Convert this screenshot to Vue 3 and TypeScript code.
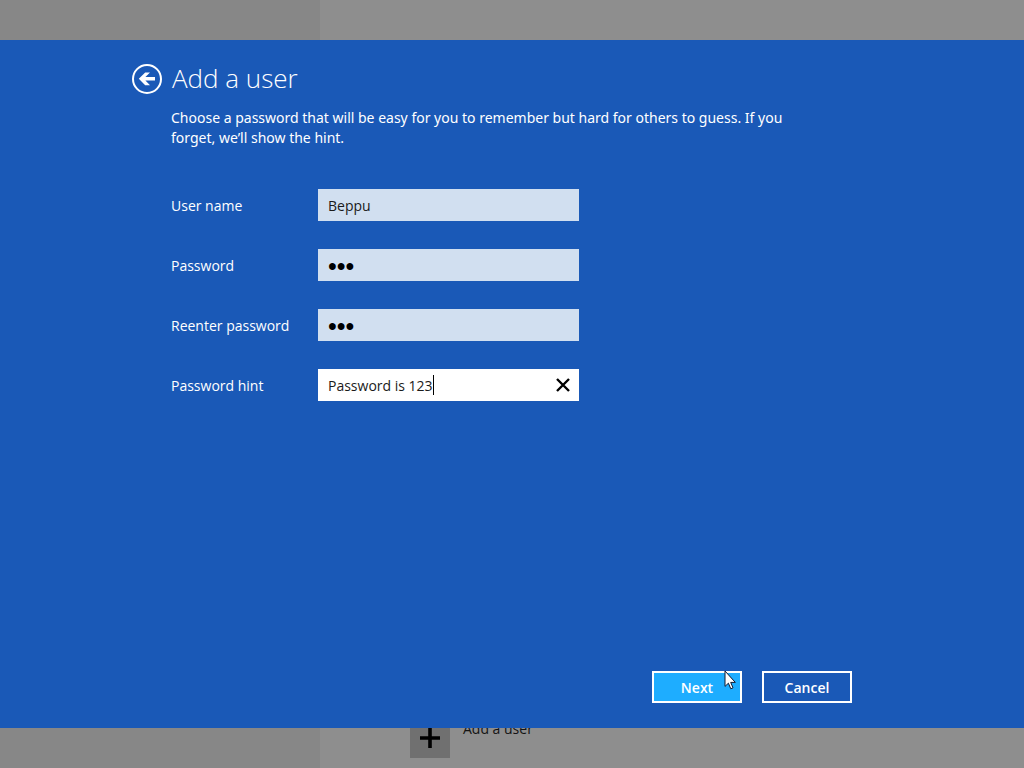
<script setup lang="ts">
import { ref } from 'vue'

interface SecretField {
  id: string
  label: string
  value: string
}

const userName = ref('Beppu')
const secrets = ref<SecretField[]>([
  { id: 'password', label: 'Password', value: '123' },
  { id: 'reenter', label: 'Reenter password', value: '123' },
])
const hint = ref('Password is 123')
</script>

<template>
  <div class="screen">
    <div class="settings">
      <aside class="sidebar"></aside>
      <main class="accounts">
        <button class="add-user" type="button">
          <span class="tile">
            <svg viewBox="0 0 40 40" width="40" height="40" aria-hidden="true">
              <path d="M20 10v20M10 20h20" stroke="#000" stroke-width="3.6" fill="none" />
            </svg>
          </span>
          <span class="add-label">Add a user</span>
        </button>
      </main>
    </div>

    <form class="dialog" @submit.prevent>
      <header class="head">
        <button class="back" type="button" aria-label="Back">
          <svg viewBox="0 0 30 30" width="30" height="30" aria-hidden="true">
            <circle cx="15" cy="15" r="14" fill="none" stroke="#fff" stroke-width="2" />
            <path d="M6.8 14.8L13.2 8.4H18L13.4 13H23V16.6H13.4L18 21.2H13.2Z" fill="#fff" />
          </svg>
        </button>
        <h1>Add a user</h1>
      </header>

      <div class="content">
        <p class="intro">
          Choose a password that will be easy for you to remember but hard for others to guess. If you
          forget, we’ll show the hint.
        </p>

        <div class="fields">
          <label for="username">User name</label>
          <input id="username" v-model="userName" class="box" type="text" />

          <template v-for="field in secrets" :key="field.id">
            <label :for="field.id">{{ field.label }}</label>
            <input :id="field.id" v-model="field.value" class="box secret" type="password" />
          </template>

          <label for="hint">Password hint</label>
          <div class="box active">
            <input id="hint" v-model="hint" class="hint" type="text" />
            <span class="caret"></span>
            <button class="clear" type="button" aria-label="Clear" @click="hint = ''">
              <svg viewBox="0 0 14 14" width="14" height="14" aria-hidden="true">
                <path d="M1 1L13 13M13 1L1 13" stroke="#000" stroke-width="2.4" fill="none" />
              </svg>
            </button>
          </div>
        </div>
      </div>

      <footer class="actions">
        <button class="action primary" type="submit">
          Next
          <svg class="pointer" viewBox="0 0 12 20" width="12" height="20" aria-hidden="true">
            <path
              d="M1 0V15.4L4.4 12.2L6.8 17.8L9 16.8L6.7 11.4H11.3Z"
              fill="#fff"
              stroke="#101830"
              stroke-width="1"
            />
          </svg>
        </button>
        <button class="action" type="button">Cancel</button>
      </footer>
    </form>
  </div>
</template>

<style>
body {
  margin: 0;
}
</style>

<style scoped>
.screen {
  position: relative;
  min-height: 100vh;
  display: flex;
  font-family: 'Open Sans', 'Noto Sans', sans-serif;
  font-size: 14px;
  line-height: 20px;
  color: #fff;
}

button,
input {
  font: inherit;
  color: inherit;
  margin: 0;
  padding: 0;
  border: 0;
  background: none;
  box-sizing: border-box;
}

svg {
  display: block;
}

.settings {
  flex: 1;
  display: flex;
  background: #8e8e8e;
}

.sidebar {
  width: 320px;
  background: #878787;
}

.accounts {
  flex: 1;
  display: flex;
  flex-direction: column;
  justify-content: flex-end;
  align-items: flex-start;
  padding: 0 90px 10px;
}

.add-user {
  display: flex;
  align-items: flex-start;
  gap: 13px;
  color: #141414;
}

.add-label {
  line-height: 22px;
}

.tile {
  background: #707070;
}

.dialog {
  position: absolute;
  inset: 40px 0;
  box-sizing: border-box;
  display: flex;
  flex-direction: column;
  padding: 20px 172px 25px 132px;
  background: #1a59b7;
}

.head {
  display: flex;
  align-items: center;
  gap: 10px;
}

h1 {
  margin: 0;
  padding-bottom: 2px;
  font-size: 26px;
  line-height: 36px;
  font-weight: 300;
}

.content {
  flex: 1;
  padding-left: 39px;
}

.intro {
  margin: 10px 0 41px;
  max-width: 640px;
  font-family: 'Noto Sans', 'Open Sans', sans-serif;
}

.fields {
  display: grid;
  grid-template-columns: 119px 261px;
  column-gap: 28px;
  row-gap: 28px;
  align-items: center;
}

.fields label {
  padding-top: 2px;
  white-space: nowrap;
}

.box {
  width: 100%;
  height: 32px;
  padding: 0 9px 0 10px;
  background: #d1dff0;
  color: #1a1a1a;
  outline: none;
}

.secret {
  padding-top: 3px;
  font-family: 'Liberation Sans', sans-serif;
  font-size: 25px;
  color: #000;
}

.active {
  display: flex;
  align-items: center;
  box-sizing: border-box;
  background: #fff;
}

.hint {
  field-sizing: content;
  max-width: 200px;
  height: 32px;
  outline: none;
  caret-color: transparent;
}

.caret {
  width: 1px;
  height: 20px;
  background: #000;
}

.clear {
  margin-left: auto;
}

.actions {
  display: flex;
  justify-content: flex-end;
  gap: 20px;
}

.action {
  position: relative;
  width: 90px;
  height: 32px;
  padding-top: 1px;
  border: 2px solid #fff;
  font-weight: 600;
}

.primary {
  background: #1eadff;
}

.pointer {
  position: absolute;
  top: -2px;
  right: 4px;
}
</style>
